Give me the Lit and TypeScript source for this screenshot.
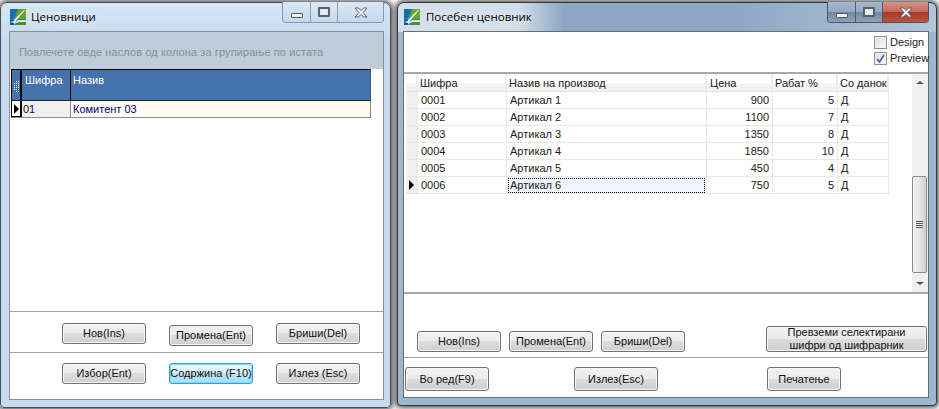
import { LitElement, html, css } from "lit";
import { customElement } from "lit/decorators.js";

const logo = () => html`<svg class="logo" width="16" height="16" viewBox="0 0 16 16">
  <rect width="16" height="16" fill="#1f78b8"/>
  <path d="M0 0H8L3 9 0 10Z" fill="#1a6cab"/>
  <path d="M8 0H16V10H7L5 8Z" fill="#6aa52a"/>
  <path d="M3 12 14 1 15 1 6 12Z" fill="#f4f8ee"/>
  <path d="M8 11H16V13L6 14Z" fill="#dfeccf"/>
  <path d="M8 13H16V16H6Z" fill="#4f8f1c"/>
  <path d="M0 11H4L6 13 3 16H0Z" fill="#0f5599"/>
  <path d="M0 13 4 12 5 9 5.6 12 9 13 5.6 13.6 5 16 4 14Z" fill="#e6f1fa"/>
</svg>`;

const caption = (dark: boolean) => html`<div class="caps ${dark ? "dark" : ""}">
  <div class="cap min"><span></span></div>
  <div class="cap max"><span></span></div>
  <div class="cap close">
    <svg width="14" height="11" viewBox="0 0 14 11"><path d="M1 1H4.5L7 3.6 9.5 1H13L9 5.5 13 10H9.5L7 7.4 4.5 10H1L5 5.5Z" fill="#f4f6f8" stroke="#59606a" stroke-width="1"/></svg>
  </div>
</div>`;

const rows = [
  ["0001", "Артикал 1", "900", "5", "Д"],
  ["0002", "Артикал 2", "1100", "7", "Д"],
  ["0003", "Артикал 3", "1350", "8", "Д"],
  ["0004", "Артикал 4", "1850", "10", "Д"],
  ["0005", "Артикал 5", "450", "4", "Д"],
  ["0006", "Артикал 6", "750", "5", "Д"],
];

@customElement("app-root")
export class AppRoot extends LitElement {
  static styles = css`
    :host { display: block; width: 939px; height: 409px; position: relative; overflow: hidden; background: #fff;
      font-family: Tahoma, "Liberation Sans", sans-serif; font-size: 11px; color: #000; }
    * { box-sizing: border-box; }
    .win { position: absolute; border: 1px solid #4a4f55; border-radius: 7px 7px 4px 4px; display: flex; flex-direction: column;
      box-shadow: 0 0 5px 2px rgba(30,30,30,.75); }
    .w1 { left: 0; top: 2px; width: 391px; height: 406px; padding: 0 6px 7px 8px;
      background: linear-gradient(#d6e6f6, #c6dbf0 40px); }
    .w2 { left: 397px; top: 2px; width: 540px; height: 404px; padding: 0 7px 7px 5px; border-color: #33383d;
      background:
        linear-gradient(90deg, #d3dfeb 0, #d3dfeb 120px, #8ea8c4 165px, #8ea8c4 340px, #b2c5da 100%) 0 0 / 100% 29px no-repeat,
        #9fb6cf; }
    .title { height: 28px; flex: none; display: flex; align-items: flex-start; position: relative; }
    .logo { margin: 6px 5px 0 1px; flex: none; }
    .ttext { font-family: "Open Sans", "Noto Sans", sans-serif; font-size: 11.5px; line-height: 16px; margin-top: 6px; color: #000; text-shadow: 0 0 6px #fff; }
    .w2 .ttext { margin-left: 1px; }
    .caps { position: absolute; top: -1px; right: 0; height: 21px; display: flex; border: 1px solid #8396ab; border-top: 0; border-radius: 0 0 4px 4px; overflow: hidden; }
    .cap { display: flex; align-items: center; justify-content: center; border-right: 1px solid #8da1b6; background: linear-gradient(#dbe8f5, #c5d8ec); }
    .min { width: 28px; } .max { width: 27px; } .close { width: 45px; border-right: 0; }
    .min span { width: 12px; height: 5px; margin-top: 6px; background: #f2f5f8; border: 1px solid #555b63; border-radius: 1px; }
    .max span { width: 12px; height: 10px; background: #eef2f6; border: 2px solid #5a6068; border-radius: 1px; box-shadow: inset 0 0 0 2px #dfe8f1; }
    .caps.dark { border-color: #4b5560; }
    .caps.dark .cap { background: linear-gradient(#a3b6cb 0, #94a9c0 48%, #73889f 52%, #8da3ba 100%); border-color: #4f5a66; }
    .caps.dark .close { background: linear-gradient(#d89288 0, #c56a5c 48%, #a93626 52%, #b95444 100%); }
    .client { flex: 1; background: #fff; border: 1px solid #6c6c6c; display: flex; flex-direction: column; min-height: 0; }
    .w1 .client { border-color: #8a8f94; }

    .btn { height: 21px; width: 84px; border: 1px solid #707070; border-radius: 3px; display: flex; align-items: center; justify-content: center; text-align: center;
      background: linear-gradient(#f2f2f2 0, #ebebeb 48%, #dddddd 50%, #cfcfcf 100%); font-size: 11px; line-height: 13px; white-space: nowrap; flex: none; color: #111; box-shadow: inset 0 0 0 1px #f6f6f6; }
    .btn.focus { border-color: #2f9fd8; box-shadow: inset 0 0 0 1px #7fdcf8; background: linear-gradient(#e9f7fd 0, #d9f0fb 48%, #bfe6f8 50%, #a9daf3 100%); }

    .group { height: 37px; background: #bfccd9; color: #8a8f96; flex: none; padding: 13px 0 0 9px; line-height: 15px; letter-spacing: .1px; }
    .grid1 { flex: none; margin-left: 1px; width: 360px; }
    .ghead { display: grid; grid-template-columns: 10px 49px 1fr; height: 32px; background: #4672ab; color: #fff; border: 1px solid #000; border-right: 1px solid #3e5f8a; border-bottom: 1px solid #222; }
    .ghead > div { border-right: 1px solid #000; padding: 3px 0 0 2px; line-height: 14px; }
    .ghead > div:first-child { border-right-width: 2px; padding: 0; display: flex; align-items: center; justify-content: center; }
    .ghead > div:nth-child(2) { padding-left: 3px; }
    .ghead > div:last-child { border-right: 0; }
    .dots { display: block; margin-top: 3px; }
    .grow { display: grid; grid-template-columns: 10px 49px 1fr; height: 17px; border: 1px solid #8c8c8c; border-top: 0; border-left: 1px solid #000; line-height: 16px; }
    .grow > div { border-right: 1px solid #8c8c8c; padding-left: 1px; }
    .grow > div:first-child { border-right: 2px solid #000; padding: 0; background: #fff; display: flex; align-items: center; justify-content: center; border-bottom: 1px solid #000; }
    .grow > div:nth-child(2) { background: #f0f0f0; color: #101040; }
    .grow > div:nth-child(3) { background: #fffaf0; color: #000080; border-right: 0; padding-left: 2px; }
    .tri { width: 0; height: 0; border-left: 5px solid #000; border-top: 5px solid transparent; border-bottom: 5px solid transparent; }

    .w1 .spacer { flex: 1; }
    .sec { flex: none; border-top: 1px solid #a0a0a0; display: flex; }
    .sec1 { height: 41px; padding: 11px 0 0 52px; gap: 23px; }
    .sec1 .btn:nth-child(2) { margin-top: 2px; }
    .sec2 { height: 47px; padding: 10px 0 0 52px; gap: 23px; }

    .top { height: 42px; flex: none; border-bottom: 2px solid #a8a8a8; display: flex; flex-direction: column; align-items: flex-end; padding-top: 4px; gap: 3px; }
    .chk { display: flex; align-items: center; gap: 3px; width: 54px; height: 13px; line-height: 13px; white-space: nowrap; color: #222; }
    .box { width: 13px; height: 13px; border: 1px solid #8e8f8f; background: linear-gradient(135deg, #dcdcdc, #fbfbfb); box-shadow: inset 0 0 0 1px #f0f0f0; flex: none; display: flex; align-items: center; justify-content: center; }
    .mid { flex: none; height: 220px; display: flex; border-bottom: 2px solid #a8a8a8; }
    .tbl { flex: 1; padding: 0 0 0 2px; }
    .hrow, .drow { display: grid; grid-template-columns: 12px 89px 200px 66px 65px 51px; width: 483px; height: 17px; line-height: 16px; }
    .hrow { height: 18px; background: linear-gradient(#fff 0, #fff 50%, #f4f4f4 55%, #f0f0f0 100%); border-bottom: 1px solid #e4e4e4; width: 483px; }
    .hrow > div { border-right: 2px solid #ececec; padding: 1px 0 0 2px; white-space: nowrap; color: #222; }
    .hrow > div:nth-child(4) { padding-left: 3px; }
    .drow > div { border-right: 1px solid #e8e8e8; border-bottom: 1px solid #e8e8e8; padding-left: 3px; white-space: nowrap; color: #1a1a1a; position: relative; }
    .drow > .rh { background: #f0f0f0; padding: 0; display: flex; align-items: center; justify-content: center; }
    .drow > .num { text-align: right; padding: 0 3px 0 0; }
    .drow > .cur { background: #f0f6fe; }
    .drow > .cur::after { content: ""; position: absolute; left: 1px; right: 1px; top: 1px; bottom: 0; border: 1px dotted #000; }
    .sb { width: 16px; background: #f0f0f0; display: flex; flex-direction: column; align-items: stretch; }
    .arr { height: 17px; flex: none; display: flex; align-items: center; justify-content: center; }
    .up { width: 0; height: 0; border: 4px solid transparent; border-top: 0; border-bottom: 3px solid #4d5560; }
    .dn { width: 0; height: 0; border: 4px solid transparent; border-bottom: 0; border-top: 3px solid #4d5560; }
    .track { flex: 1; display: flex; flex-direction: column; padding-top: 85px; }
    .thumb { height: 97px; width: 15px; border: 1px solid #8c8c8c; border-radius: 2px; background: linear-gradient(90deg, #f4f4f4, #e6e6e6 50%, #cfcfcf); display: flex; align-items: center; justify-content: center; }
    .grip { width: 7px; height: 7px; background: repeating-linear-gradient(#555 0 1px, #eee 1px 2px); }

    .w2 .body { flex: 1; display: flex; align-items: flex-end; padding: 0 1px 5px 13px; gap: 8px; }
    .w2 .btn.big { width: 161px; height: 26px; margin-left: 73px; }
    .foot { flex: none; height: 40px; border-top: 1px solid #a0a0a0; display: flex; padding: 9px 0 0 1px; }
    .foot .btn { height: 24px; }
    .foot .b1 { width: 84px; } .foot .b2 { width: 84px; margin-left: 85px; } .foot .b3 { width: 74px; margin-left: 109px; }
  `;

  render() {
    return html`
      <div class="win w1">
        <div class="title">${logo()}<div class="ttext">Ценовници</div>${caption(false)}</div>
        <div class="client">
          <div class="group">Повлечете овде наслов од колона за групирање по истата</div>
          <div class="grid1">
            <div class="ghead"><div><svg class="dots" width="5" height="11" viewBox="0 0 5 11" fill="#fff">
              <rect x="2" y="0" width="1" height="1"/><rect x="4" y="0" width="1" height="1"/>
              <rect x="0" y="2" width="1" height="1"/><rect x="2" y="2" width="1" height="1"/><rect x="4" y="2" width="1" height="1"/>
              <rect x="0" y="4" width="1" height="1"/><rect x="2" y="4" width="1" height="1"/><rect x="4" y="4" width="1" height="1"/>
              <rect x="0" y="6" width="1" height="1"/><rect x="2" y="6" width="1" height="1"/><rect x="4" y="6" width="1" height="1"/>
              <rect x="0" y="8" width="1" height="1"/><rect x="2" y="8" width="1" height="1"/><rect x="4" y="8" width="1" height="1"/>
              <rect x="2" y="10" width="1" height="1"/><rect x="4" y="10" width="1" height="1"/>
            </svg></div><div>Шифра</div><div>Назив</div></div>
            <div class="grow"><div><span class="tri"></span></div><div>01</div><div>Комитент 03</div></div>
          </div>
          <div class="spacer"></div>
          <div class="sec sec1"><div class="btn">Нов(Ins)</div><div class="btn">Промена(Ent)</div><div class="btn">Бриши(Del)</div></div>
          <div class="sec sec2"><div class="btn">Избор(Ent)</div><div class="btn focus">Содржина (F10)</div><div class="btn">Излез (Esc)</div></div>
        </div>
      </div>
      <div class="win w2">
        <div class="title">${logo()}<div class="ttext">Посебен ценовник</div>${caption(true)}</div>
        <div class="client">
          <div class="top">
            <div class="chk"><span class="box"></span>Design</div>
            <div class="chk"><span class="box"><svg width="9" height="9" viewBox="0 0 9 9"><path d="M1 5 3.5 8 8 1" fill="none" stroke="#4a62a8" stroke-width="1.7"/></svg></span>Preview</div>
          </div>
          <div class="mid">
            <div class="tbl">
              <div class="hrow"><div></div><div>Шифра</div><div>Назив на производ</div><div>Цена</div><div>Рабат %</div><div>Со данок</div></div>
              ${rows.map((r, i) => html`<div class="drow">
                <div class="rh">${i === 5 ? html`<span class="tri"></span>` : ""}</div>
                <div>${r[0]}</div><div class="${i === 5 ? "cur" : ""}">${r[1]}</div>
                <div class="num">${r[2]}</div><div class="num">${r[3]}</div><div>${r[4]}</div></div>`)}
            </div>
            <div class="sb">
              <div class="arr"><span class="up"></span></div>
              <div class="track"><div class="thumb"><span class="grip"></span></div></div>
              <div class="arr"><span class="dn"></span></div>
            </div>
          </div>
          <div class="body">
            <div class="btn">Нов(Ins)</div><div class="btn">Промена(Ent)</div><div class="btn">Бриши(Del)</div>
            <div class="btn big">Превземи селектирани<br>шифри од шифрарник</div>
          </div>
          <div class="foot"><div class="btn b1">Во ред(F9)</div><div class="btn b2">Излез(Esc)</div><div class="btn b3">Печатење</div></div>
        </div>
      </div>`;
  }
}
